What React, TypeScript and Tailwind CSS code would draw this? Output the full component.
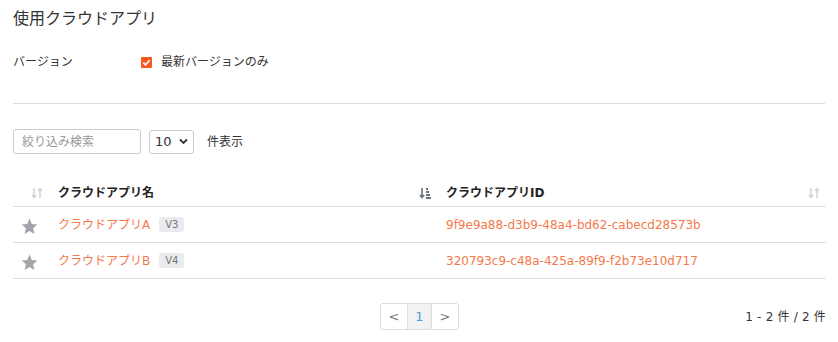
import React from 'react';

const font = { fontFamily: '"DejaVu Sans", "Noto Sans CJK JP", sans-serif' };

const SortBoth = () => (
  <svg width="12" height="12" viewBox="0 0 12 12" className="text-gray-300">
    <path d="M3 1v9M1 8l2 2.5L5 8" stroke="currentColor" strokeWidth="1.6" fill="none" />
    <path d="M9 11V2M7 4l2-2.5L11 4" stroke="currentColor" strokeWidth="1.6" fill="none" />
  </svg>
);

const SortDesc = () => (
  <svg width="13" height="12" viewBox="0 0 13 12" className="text-gray-500">
    <path d="M3 1v9M1 8l2 2.5L5 8" stroke="currentColor" strokeWidth="1.6" fill="none" />
    <rect x="7" y="1" width="2" height="2" fill="currentColor" />
    <rect x="7" y="4" width="3" height="2" fill="currentColor" />
    <rect x="7" y="7" width="4" height="2" fill="currentColor" />
    <rect x="7" y="10" width="5" height="2" fill="currentColor" />
  </svg>
);

const Star = () => (
  <svg width="19" height="19" viewBox="0 0 24 24" className="text-[#a2a5a9]">
    <path fill="currentColor" d="M12 2l2.9 6.9 7.1.6-5.4 4.7 1.6 7.3L12 17.8 5.8 21.5l1.6-7.3L2 9.5l7.1-.6z" />
  </svg>
);

const rows = [
  { name: 'クラウドアプリA', ver: 'V3', id: '9f9e9a88-d3b9-48a4-bd62-cabecd28573b' },
  { name: 'クラウドアプリB', ver: 'V4', id: '320793c9-c48a-425a-89f9-f2b73e10d717' },
];

export default function App() {
  return (
    <div className="w-[838px] h-[342px] bg-white text-[#333] px-[13px] pt-[8px]" style={font}>
      <h1 className="text-[16px] leading-[22px] text-[#333]">使用クラウドアプリ</h1>

      <div className="flex items-center mt-[22px] text-[12px] h-[20px]">
        <span className="w-[128px]">バージョン</span>
        <span className="w-[11px] h-[11px] bg-[#f55a1e] rounded-[1px] flex items-center justify-center">
          <svg width="9" height="9" viewBox="0 0 10 10">
            <path d="M1.5 5.2l2.3 2.3L8.5 2.5" stroke="white" strokeWidth="1.8" fill="none" />
          </svg>
        </span>
        <span className="ml-[9px]">最新バージョンのみ</span>
      </div>

      <div className="border-t border-[#d9d9d9] mt-[31px]" />

      <div className="flex items-center mt-[25px] h-[25px]">
        <input
          placeholder="絞り込み検索"
          className="w-[128px] h-[25px] border border-[#ccc] rounded-[3px] px-[8px] text-[12px] placeholder:text-[#999] outline-none"
        />
        <div className="ml-[8px] w-[45px] h-[24px] border border-[#ccc] rounded-[3px] flex items-center justify-between px-[5px] text-[13px]">
          <span>10</span>
          <svg width="9" height="7" viewBox="0 0 9 7">
            <path d="M1 1.5l3.5 3.5L8 1.5" stroke="#333" strokeWidth="1.8" fill="none" />
          </svg>
        </div>
        <span className="ml-[13px] text-[12px]">件表示</span>
      </div>

      <div className="mt-[25px] w-[813px]">
        <div className="flex items-center h-[28px] border-b border-[#dcdcdc] text-[12px] font-bold text-[#222]">
          <div className="w-[45px] pl-[18px]"><SortBoth /></div>
          <div className="w-[361px]">クラウドアプリ名</div>
          <div className="w-[27px] pt-[1px]"><SortDesc /></div>
          <div className="flex-1">クラウドアプリID</div>
          <div className="w-[18px]"><SortBoth /></div>
        </div>
        {rows.map((r) => (
          <div key={r.id} className="flex items-center h-[36px] border-b border-[#dcdcdc] text-[12px]">
            <div className="w-[45px] pl-[7px] pt-[3px]"><Star /></div>
            <div className="w-[388px] flex items-center">
              <span className="text-[#f5794a]">{r.name}</span>
              <span className="ml-[9px] bg-[#e9ebee] text-[#777] text-[10px] leading-[15px] px-[6px] rounded-[3px]">{r.ver}</span>
            </div>
            <div className="text-[#f5794a]">{r.id}</div>
          </div>
        ))}
      </div>

      <div className="flex items-center mt-[24px] w-[813px] relative">
        <div className="flex-1 flex justify-center">
          <div className="flex border border-[#ddd] rounded-[3px] h-[27px] text-[13px] text-[#777]">
            <div className="w-[26px] flex items-center justify-center">&lt;</div>
            <div className="w-[25px] flex items-center justify-center bg-[#f1f2f4] text-[#5a9bd0] border-x border-[#ddd]">1</div>
            <div className="w-[26px] flex items-center justify-center">&gt;</div>
          </div>
        </div>
        <div className="absolute right-0 text-[12px] text-[#333] tracking-[0.2px]">1 - 2 件 / 2 件</div>
      </div>
    </div>
  );
}
